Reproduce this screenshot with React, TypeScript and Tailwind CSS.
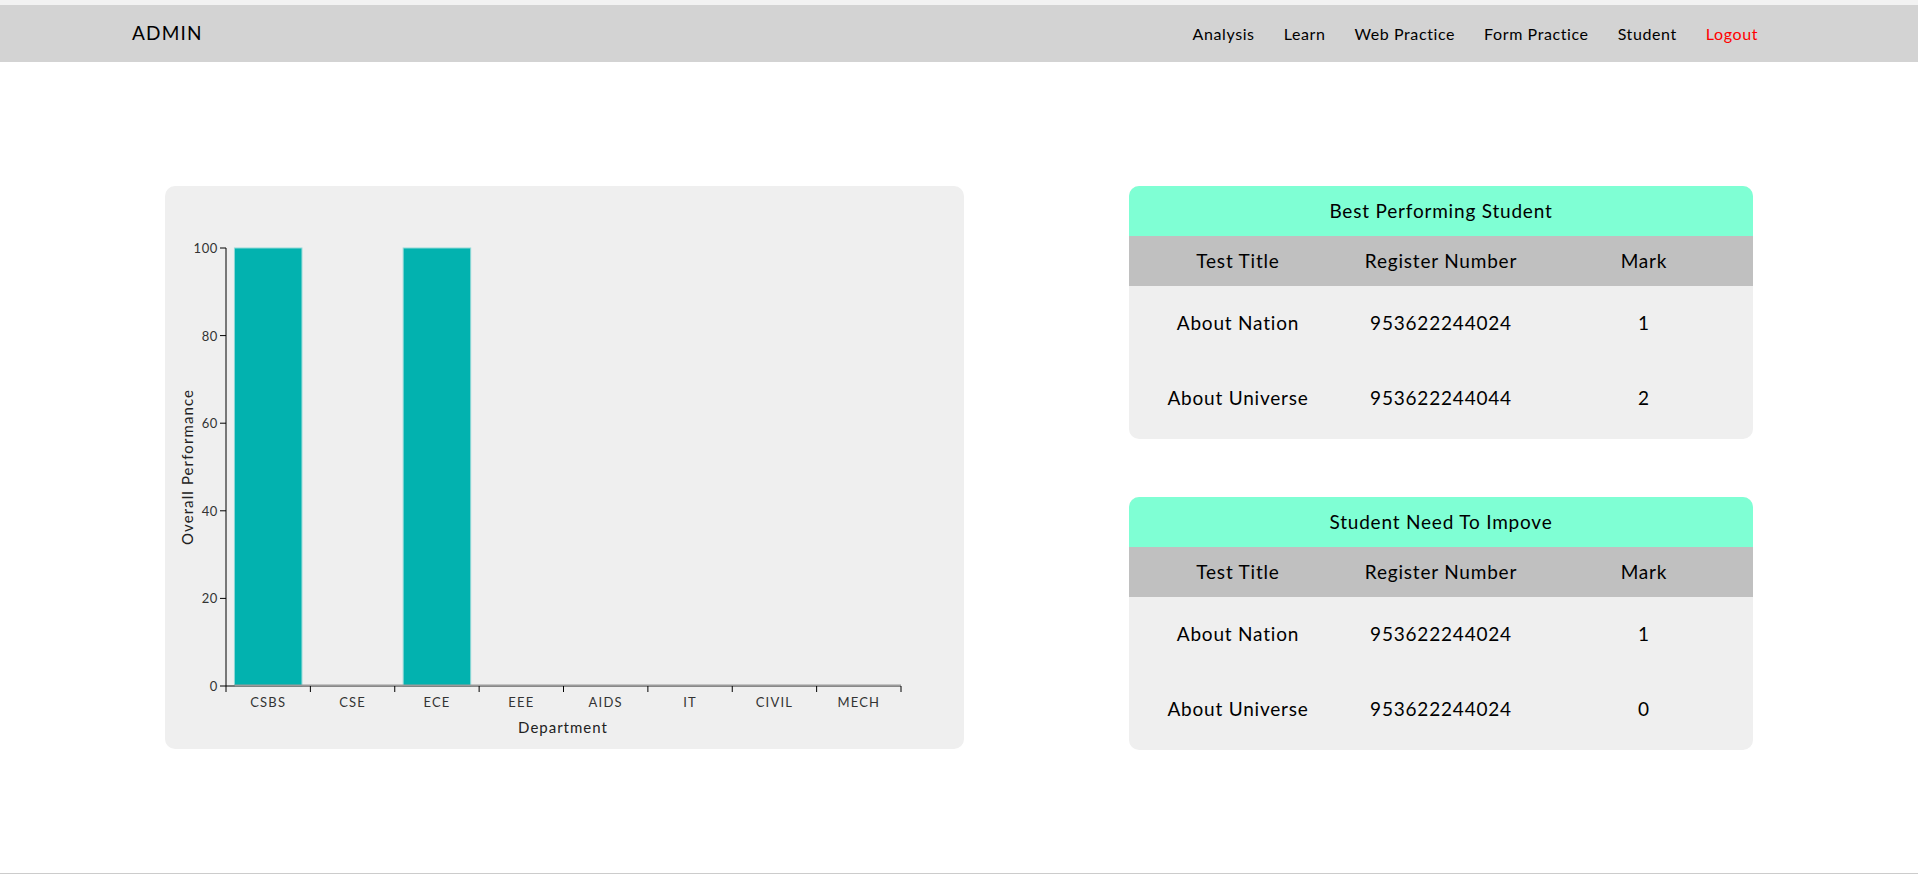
const font = { fontFamily: 'Lato, "Open Sans", sans-serif' };

const departments = ['CSBS', 'CSE', 'ECE', 'EEE', 'AIDS', 'IT', 'CIVIL', 'MECH'];
const scores = [100, 0, 100, 0, 0, 0, 0, 0];

const best = [
  { title: 'About Nation', reg: '953622244024', mark: 1 },
  { title: 'About Universe', reg: '953622244044', mark: 2 }
];
const improve = [
  { title: 'About Nation', reg: '953622244024', mark: 1 },
  { title: 'About Universe', reg: '953622244024', mark: 0 }
];

function Chart() {
  const left = 61;
  const right = 736;
  const top = 62;
  const bottom = 500;
  const band = (right - left) / departments.length;
  const yTicks = [0, 20, 40, 60, 80, 100];
  const yOf = (v: number) => bottom - ((bottom - top) * v) / 100;

  return (
    <svg width="799" height="563" className="block">
      {scores.map((s, i) =>
        s > 0 ? (
          <rect
            key={departments[i]}
            x={left + i * band + band * 0.1}
            y={yOf(s)}
            width={band * 0.8}
            height={bottom - yOf(s)}
            fill="#02b2af"
            stroke="#8fd9d7"
            strokeWidth="1"
          />
        ) : null
      )}
      <line x1={left} y1={top} x2={left} y2={bottom} stroke="#000" strokeWidth="1" />
      {yTicks.map(t => (
        <g key={t}>
          <line x1={left - 6} y1={yOf(t)} x2={left} y2={yOf(t)} stroke="#000" />
          <text
            x={left - 8}
            y={yOf(t)}
            textAnchor="end"
            dominantBaseline="central"
            fontSize="13"
            fill="#333"
            letterSpacing="0.6"
          >
            {t}
          </text>
        </g>
      ))}
      <line x1={left} y1={bottom} x2={right} y2={bottom} stroke="#000" />
      <line x1={left + band * 0.1} y1={bottom - 0.5} x2={right} y2={bottom - 0.5} stroke="#9a9a9a" strokeWidth="2" />
      {departments.map((d, i) => (
        <g key={d}>
          <line x1={left + i * band} y1={bottom} x2={left + i * band} y2={bottom + 6} stroke="#000" />
          <text
            x={left + i * band + band / 2}
            y={bottom + 16}
            textAnchor="middle"
            dominantBaseline="central"
            fontSize="13"
            fill="#333"
            letterSpacing="1.2"
          >
            {d}
          </text>
        </g>
      ))}
      <line x1={right} y1={bottom} x2={right} y2={bottom + 6} stroke="#000" />
      <text x="398" y="541" textAnchor="middle" dominantBaseline="central" fontSize="15" fill="#222" letterSpacing="1">
        Department
      </text>
      <text
        x="22"
        y="281"
        textAnchor="middle"
        dominantBaseline="central"
        fontSize="15"
        fill="#222"
        letterSpacing="1.1"
        transform="rotate(-90 22 281)"
      >
        Overall Performance
      </text>
    </svg>
  );
}

function ResultTable({ heading, rows }: { heading: string; rows: typeof best }) {
  return (
    <div className="w-[624px] bg-[#efefef] rounded-[10px] overflow-hidden pb-[3px] text-black text-[19px] tracking-[0.8px]">
      <div className="h-[50px] bg-[#7fffd4] flex items-center justify-center">{heading}</div>
      <div className="h-[50px] bg-[#c0c0c0] grid grid-cols-[218px_188px_218px] items-center text-center">
        <span>Test Title</span>
        <span>Register Number</span>
        <span>Mark</span>
      </div>
      {rows.map((r, i) => (
        <div key={i} className="h-[75px] grid grid-cols-[218px_188px_218px] items-center text-center">
          <span>{r.title}</span>
          <span>{r.reg}</span>
          <span>{r.mark}</span>
        </div>
      ))}
    </div>
  );
}

export default function App() {
  return (
    <div className="h-[874px] bg-white flex flex-col" style={font}>
      <div className="h-[5px] bg-[#f2f2f2]" />
      <nav className="h-[57px] bg-[#d3d3d3] flex items-center justify-between pl-[132px] pr-[160px]">
        <span className="text-[19px] tracking-[1.2px] text-black">ADMIN</span>
        <ul className="flex items-center gap-[29px] text-[16px] tracking-[0.6px] text-black">
          <li>Analysis</li>
          <li>Learn</li>
          <li>Web Practice</li>
          <li>Form Practice</li>
          <li>Student</li>
          <li className="text-[#ff0000]">Logout</li>
        </ul>
      </nav>
      <main className="flex-1 flex justify-evenly items-start pt-[124px]">
        <div className="w-[799px] h-[563px] bg-[#efefef] rounded-[10px]">
          <Chart />
        </div>
        <div className="flex flex-col gap-[58px]">
          <ResultTable heading="Best Performing Student" rows={best} />
          <ResultTable heading="Student Need To Impove" rows={improve} />
        </div>
      </main>
      <div className="h-px bg-[#cccccc]" />
    </div>
  );
}
